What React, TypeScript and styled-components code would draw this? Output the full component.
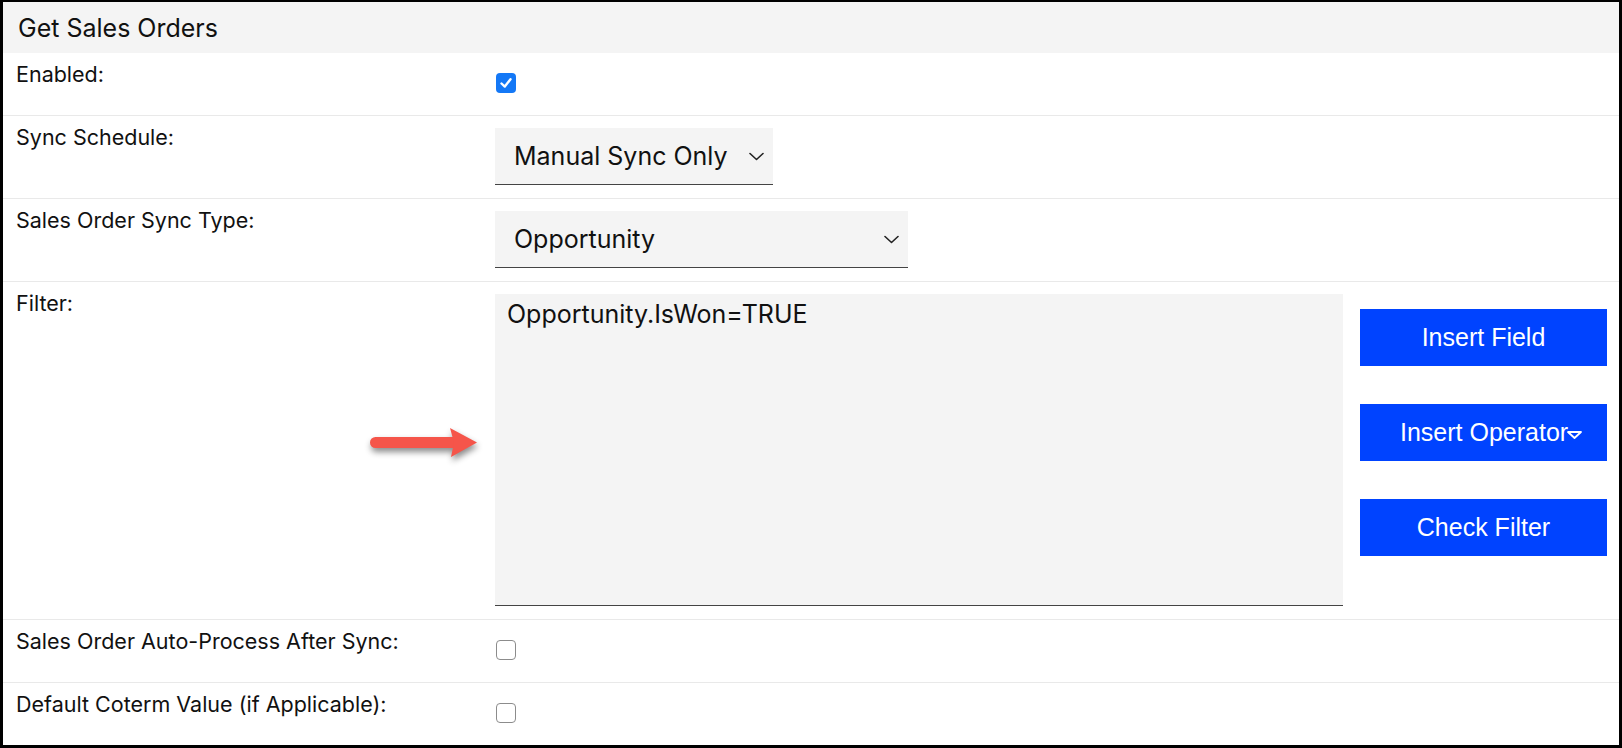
import React from "react";
import styled, { createGlobalStyle } from "styled-components";

const GlobalStyle = createGlobalStyle`
  html, body {
    margin: 0;
    padding: 0;
    background: #fff;
  }
  body {
    font-family: Inter, "Noto Sans", sans-serif;
    color: #111;
  }
`;

const Chevron = () => (
  <svg width="15" height="9" viewBox="0 0 15 9" fill="none">
    <path d="M1 1.5 L7.5 7.5 L14 1.5" stroke="#222" strokeWidth="1.6" strokeLinecap="round" strokeLinejoin="round" />
  </svg>
);

const Check = () => (
  <svg width="14" height="14" viewBox="0 0 14 14" fill="none">
    <path d="M2.5 7.5 L5.8 10.6 L11.5 3.2" stroke="#fff" strokeWidth="2.4" strokeLinecap="round" strokeLinejoin="round" />
  </svg>
);

const Caret = () => (
  <svg width="15" height="8" viewBox="0 0 15 8" fill="none">
    <path d="M1 1 H14 L7.5 7 Z" stroke="#fff" strokeWidth="1.8" strokeLinejoin="round" />
  </svg>
);

const Arrow = () => (
  <ArrowSvg width="118" height="40" viewBox="0 0 118 40">
    <rect x="5" y="13" width="88" height="11" rx="5.5" fill="#f5554a" />
    <path d="M85 4 L112 18.5 L86 33 L89 18.5 Z" fill="#f5554a" />
  </ArrowSvg>
);

export default function App() {
  return (
    <>
      <GlobalStyle />
      <Panel>
        <Header>Get Sales Orders</Header>

        <Row>
          <Label>Enabled:</Label>
          <Control>
            <Checkbox checked>
              <Check />
            </Checkbox>
          </Control>
        </Row>

        <Row>
          <Label>Sync Schedule:</Label>
          <Control>
            <Select>
              <span>Manual Sync Only</span>
              <Chevron />
            </Select>
          </Control>
        </Row>

        <Row>
          <Label>Sales Order Sync Type:</Label>
          <Control>
            <Select $width={413}>
              <span>Opportunity</span>
              <Chevron />
            </Select>
          </Control>
        </Row>

        <Row>
          <Label>
            Filter:
            <Arrow />
          </Label>
          <FilterControl>
            <FilterText>Opportunity.IsWon=TRUE</FilterText>
            <ButtonColumn>
              <ActionButton>Insert Field</ActionButton>
              <ActionButton $align="left">
                Insert Operator
                <CaretWrap>
                  <Caret />
                </CaretWrap>
              </ActionButton>
              <ActionButton>Check Filter</ActionButton>
            </ButtonColumn>
          </FilterControl>
        </Row>

        <Row>
          <Label>Sales Order Auto-Process After Sync:</Label>
          <Control>
            <Checkbox />
          </Control>
        </Row>

        <Row $last>
          <Label>Default Coterm Value (if Applicable):</Label>
          <Control>
            <Checkbox />
          </Control>
        </Row>
      </Panel>
    </>
  );
}

const Panel = styled.div`
  width: 1622px;
  height: 748px;
  box-sizing: border-box;
  border: 3px solid #000;
  border-top-width: 2px;
  display: flex;
  flex-direction: column;
  overflow: hidden;
`;

const Header = styled.div`
  height: 51px;
  display: flex;
  align-items: center;
  padding-left: 15px;
  background: #f4f4f4;
  font-size: 25px;
  color: #111;
`;

const Row = styled.div<{ $last?: boolean }>`
  display: grid;
  grid-template-columns: 492px 1fr;
  border-bottom: ${(p) => (p.$last ? "none" : "1px solid #e9e9e9")};
`;

const Label = styled.div`
  position: relative;
  padding: 8px 13px;
  font-size: 21.5px;
  line-height: 27px;
  color: #111;
`;

const Control = styled.div`
  padding: 12px 0 13px;
  display: flex;
  align-items: flex-start;
`;

const Checkbox = styled.span<{ checked?: boolean }>`
  margin: 8px 0 9px 1px;
  width: 20px;
  height: 20px;
  box-sizing: border-box;
  border-radius: 4px;
  display: flex;
  align-items: center;
  justify-content: center;
  background: ${(p) => (p.checked ? "#1478f6" : "#fff")};
  border: ${(p) => (p.checked ? "none" : "1.5px solid #8c8c8c")};
`;

const Select = styled.div<{ $width?: number }>`
  display: inline-flex;
  align-items: center;
  justify-content: space-between;
  gap: 21px;
  box-sizing: border-box;
  width: ${(p) => (p.$width ? `${p.$width}px` : "auto")};
  height: 57px;
  padding: 0 9px 0 19px;
  background: #f4f4f4;
  border-bottom: 1px solid #444;
  font-size: 25px;
  color: #111;
`;

const FilterControl = styled(Control)`
  gap: 17px;
`;

const FilterText = styled.div`
  width: 848px;
  height: 312px;
  box-sizing: border-box;
  padding: 6px 12px;
  background: #f4f4f4;
  border-bottom: 1px solid #444;
  font-size: 25px;
  line-height: 29px;
  color: #111;
`;

const ButtonColumn = styled.div`
  padding-top: 15px;
  display: flex;
  flex-direction: column;
  gap: 38px;
`;

const ActionButton = styled.button<{ $align?: "left" | "center" }>`
  width: 247px;
  height: 57px;
  border: none;
  background: #0043ff;
  color: #fff;
  font-family: "Liberation Sans", Arial, sans-serif;
  font-size: 25px;
  display: flex;
  align-items: center;
  justify-content: ${(p) => (p.$align === "left" ? "flex-start" : "center")};
  padding: ${(p) => (p.$align === "left" ? "0 0 0 40px" : "0")};
  white-space: nowrap;
  overflow: hidden;
`;

const CaretWrap = styled.span`
  display: inline-flex;
  margin-left: -1px;
  margin-top: 4px;
`;

const ArrowSvg = styled.svg`
  position: absolute;
  left: 362px;
  top: 142px;
  filter: drop-shadow(1px 4px 3px rgba(0, 0, 0, 0.45));
`;
